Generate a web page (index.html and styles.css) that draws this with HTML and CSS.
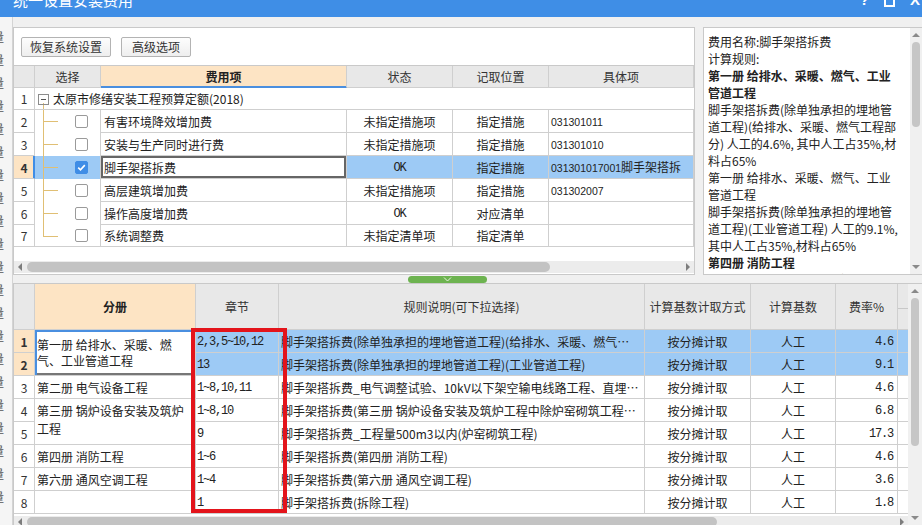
FILE: index.html
```html
<!DOCTYPE html>
<html lang="zh-CN">
<head>
<meta charset="utf-8">
<title>统一设置安装费用</title>
<link rel="stylesheet" href="styles.css">
</head>
<body>
<div class="window">
  <header class="titlebar">
    <span class="title-text">统一设置安装费用</span>
    <span class="title-btns">
      <span class="tb-help">?</span>
      <span class="tb-max"></span>
      <span class="tb-close">X</span>
    </span>
  </header>
  <div class="main">
    <div class="behind" aria-hidden="true">
      <span>量</span><span>量</span><span>量</span><span>量</span><span>量</span><span>量</span><span>量</span><span>量</span><span>量</span><span>量</span><span>量</span><span>量</span><span>量</span><span>量</span><span>量</span><span>量</span><span>量</span><span>量</span><span>量</span><span>量</span><span>量</span>
    </div>
    <div class="content">
      <div class="top">
        <section class="grid-panel">
          <div class="toolbar">
            <button class="btn btn-wide">恢复系统设置</button>
            <button class="btn btn-narrow">高级选项</button>
          </div>
          <table class="grid tgrid">
            <colgroup>
              <col class="tc-num"><col class="tc-sel"><col class="tc-fee"><col class="tc-state"><col class="tc-pos"><col>
            </colgroup>
            <thead>
              <tr><th></th><th>选择</th><th class="hl">费用项</th><th>状态</th><th>记取位置</th><th>具体项</th></tr>
            </thead>
            <tbody>
              <tr><td class="num">1</td><td colspan="5" class="root"><span class="minus"></span>太原市修缮安装工程预算定额(2018)</td></tr>
              <tr><td class="num">2</td><td class="sel"><span class="cb"></span></td><td class="name">有害环境降效增加费</td><td class="c">未指定措施项</td><td class="c">指定措施</td><td class="code"><span class="dg">031301011</span></td></tr>
              <tr><td class="num">3</td><td class="sel"><span class="cb"></span></td><td class="name">安装与生产同时进行费</td><td class="c">未指定措施项</td><td class="c">指定措施</td><td class="code"><span class="dg">031301010</span></td></tr>
              <tr class="cur"><td class="num">4</td><td class="sel"><span class="cb on"><svg viewBox="0 0 11 11" width="11" height="11"><path d="M2.2 5.6l2.3 2.3 4.3-4.8" stroke="#fff" stroke-width="1.6" fill="none"/></svg></span></td><td class="name active">脚手架搭拆费</td><td class="c"><span class="mono">OK</span></td><td class="c">指定措施</td><td class="code"><span class="dg">031301017001</span>脚手架搭拆</td></tr>
              <tr><td class="num">5</td><td class="sel"><span class="cb"></span></td><td class="name">高层建筑增加费</td><td class="c">未指定措施项</td><td class="c">指定措施</td><td class="code"><span class="dg">031302007</span></td></tr>
              <tr><td class="num">6</td><td class="sel"><span class="cb"></span></td><td class="name">操作高度增加费</td><td class="c"><span class="mono">OK</span></td><td class="c">对应清单</td><td class="code"></td></tr>
              <tr><td class="num">7</td><td class="sel last"><span class="cb"></span></td><td class="name">系统调整费</td><td class="c">未指定清单项</td><td class="c">指定清单</td><td class="code"></td></tr>
            </tbody>
          </table>
          <div class="fill"></div>
          <div class="hscroll">
            <span class="arr-left"></span>
            <span class="hthumb top-thumb"></span>
            <span class="spacer"></span>
            <span class="arr-right"></span>
          </div>
        </section>
        <aside class="info">
          <div class="info-text">
            <p>费用名称:脚手架搭拆费</p>
            <p>计算规则:</p>
            <p class="b">第一册 给排水、采暖、燃气、工业</p>
            <p class="b">管道工程</p>
            <p>脚手架搭拆费(除单独承担的埋地管</p>
            <p>道工程)(给排水、采暖、燃气工程部</p>
            <p>分) 人工的4.6%, 其中人工占35%,材</p>
            <p>料占65%</p>
            <p>第一册 给排水、采暖、燃气、工业</p>
            <p>管道工程</p>
            <p>脚手架搭拆费(除单独承担的埋地管</p>
            <p>道工程)(工业管道工程) 人工的9.1%,</p>
            <p>其中人工占35%,材料占65%</p>
            <p class="b">第四册 消防工程</p>
            <p>脚手架搭拆费(第四册 消防工程) 人</p>
          </div>
          <div class="vscroll info-scroll">
            <span class="arr-up"></span>
            <span class="vthumb info-thumb"></span>
            <span class="spacer"></span>
            <span class="arr-down"></span>
          </div>
        </aside>
      </div>
      <div class="splitter">
        <div class="handle"><svg width="9" height="5" viewBox="0 0 9 5"><path d="M1 0.5l3.5 3.5 3.5-3.5" stroke="#e9f4e2" stroke-width="1" fill="none"/></svg></div>
      </div>
      <section class="bottom">
        <div class="bottom-main">
          <table class="grid bgrid">
            <colgroup>
              <col class="bc-num"><col class="bc-vol"><col class="bc-chap"><col class="bc-rule"><col class="bc-way"><col class="bc-base"><col class="bc-rate"><col>
            </colgroup>
            <thead>
              <tr><th></th><th class="hl">分册</th><th>章节</th><th>规则说明(可下拉选择)</th><th>计算基数计取方式</th><th>计算基数</th><th>费率%</th><th class="xh"></th></tr>
            </thead>
            <tbody>
              <tr class="on">
                <td class="num">1</td>
                <td rowspan="2" class="vol two active">第一册 给排水、采暖、燃<br>气、工业管道工程</td>
                <td class="chap"><span class="mono">2,3,5~10,12</span></td>
                <td class="rule">脚手架搭拆费(除单独承担的埋地管道工程)(给排水、采暖、燃气…</td>
                <td class="c">按分摊计取</td><td class="c">人工</td><td class="rate"><span class="mono">4.6</span></td><td></td>
              </tr>
              <tr class="on">
                <td class="num">2</td>
                <td class="chap"><span class="mono">13</span></td>
                <td class="rule">脚手架搭拆费(除单独承担的埋地管道工程)(工业管道工程)</td>
                <td class="c">按分摊计取</td><td class="c">人工</td><td class="rate"><span class="mono">9.1</span></td><td></td>
              </tr>
              <tr>
                <td class="num">3</td>
                <td class="vol">第二册 电气设备工程</td>
                <td class="chap"><span class="mono">1~8,10,11</span></td>
                <td class="rule">脚手架搭拆费_电气调整试验、10kV以下架空输电线路工程、直埋…</td>
                <td class="c">按分摊计取</td><td class="c">人工</td><td class="rate"><span class="mono">4.6</span></td><td></td>
              </tr>
              <tr>
                <td class="num">4</td>
                <td rowspan="2" class="vol two low">第三册 锅炉设备安装及筑炉<br>工程</td>
                <td class="chap"><span class="mono">1~8,10</span></td>
                <td class="rule">脚手架搭拆费(第三册 锅炉设备安装及筑炉工程中除炉窑砌筑工程…</td>
                <td class="c">按分摊计取</td><td class="c">人工</td><td class="rate"><span class="mono">6.8</span></td><td></td>
              </tr>
              <tr>
                <td class="num">5</td>
                <td class="chap"><span class="mono">9</span></td>
                <td class="rule">脚手架搭拆费_工程量500m3以内(炉窑砌筑工程)</td>
                <td class="c">按分摊计取</td><td class="c">人工</td><td class="rate"><span class="mono">17.3</span></td><td></td>
              </tr>
              <tr>
                <td class="num">6</td>
                <td class="vol">第四册 消防工程</td>
                <td class="chap"><span class="mono">1~6</span></td>
                <td class="rule">脚手架搭拆费(第四册 消防工程)</td>
                <td class="c">按分摊计取</td><td class="c">人工</td><td class="rate"><span class="mono">4.6</span></td><td></td>
              </tr>
              <tr>
                <td class="num">7</td>
                <td class="vol">第六册 通风空调工程</td>
                <td class="chap"><span class="mono">1~4</span></td>
                <td class="rule">脚手架搭拆费(第六册 通风空调工程)</td>
                <td class="c">按分摊计取</td><td class="c">人工</td><td class="rate"><span class="mono">3.6</span></td><td></td>
              </tr>
              <tr>
                <td class="num">8</td>
                <td class="vol"></td>
                <td class="chap"><span class="mono">1</span></td>
                <td class="rule">脚手架搭拆费(拆除工程)</td>
                <td class="c">按分摊计取</td><td class="c">人工</td><td class="rate"><span class="mono">1.8</span></td><td></td>
              </tr>
            </tbody>
          </table>
          <div class="hscroll bottom-h">
            <span class="arr-left"></span>
            <span class="hthumb bottom-thumb"></span>
            <span class="spacer"></span>
            <span class="arr-right"></span>
          </div>
        </div>
        <div class="vscroll bottom-scroll">
          <span class="arr-up"></span>
          <span class="vthumb bottom-vthumb"></span>
          <span class="spacer"></span>
          <span class="arr-down"></span>
        </div>
        <div class="mark" aria-hidden="true"></div>
      </section>
    </div>
  </div>
</div>
</body>
</html>
```

FILE: styles.css
```css
* { box-sizing: border-box; }
html, body { margin: 0; padding: 0; }
body {
  width: 922px;
  height: 525px;
  overflow: hidden;
  background: #f0f0f0;
  font-family: "Noto Sans CJK SC", "Liberation Sans", sans-serif;
  font-size: 12px;
  color: #222;
}
p { margin: 0; }

.window { display: flex; flex-direction: column; height: 525px; }

/* title bar */
.titlebar {
  height: 17px;
  flex: none;
  background: #3f8ee6;
  color: #fff;
  display: flex;
  justify-content: space-between;
  overflow: hidden;
}
.title-text {
  font-size: 15px;
  line-height: 16px;
  margin-top: -8px;
  padding-left: 13px;
}
.title-btns {
  display: flex;
  align-items: flex-start;
  gap: 15px;
  padding-right: 2px;
  margin-top: -8px;
  font-family: "Liberation Sans", sans-serif;
  font-size: 15px;
  line-height: 16px;
  font-weight: bold;
}
.tb-max {
  width: 11px;
  height: 15px;
  border: 2px solid #fff;
}

/* main */
.main { flex: 1; display: flex; min-height: 0; }
.behind {
  width: 13px;
  flex: none;
  overflow: hidden;
  padding-top: 8px;
  background: #f5f5f5;
  border-right: 1px solid #d4d4d4;
}
.behind span {
  display: block;
  margin-left: -8px;
  line-height: 23px;
  color: #555;
}
.content {
  flex: 1;
  display: flex;
  flex-direction: column;
  padding-top: 10px;
  min-width: 0;
}

.top { display: flex; gap: 8px; height: 248px; flex: none; }

.grid-panel {
  width: 682px;
  flex: none;
  background: #fff;
  border: 1px solid #c9c9c9;
  display: flex;
  flex-direction: column;
  padding-bottom: 1px;
}
.toolbar {
  height: 38px;
  flex: none;
  border-bottom: 1px solid #c9c9c9;
  padding: 9px 0 0 7px;
  display: flex;
  align-items: flex-start;
  gap: 10px;
}
.btn {
  height: 20px;
  padding: 0;
  font-family: "Noto Sans CJK SC", sans-serif;
  font-size: 12px;
  line-height: 18px;
  color: #333;
  background: linear-gradient(#fdfdfd, #eeeeee);
  border: 1px solid #b3b3b3;
  border-radius: 2px;
}
.btn-wide { width: 90px; }
.btn-narrow { width: 70px; }

/* grids */
.grid {
  border-collapse: separate;
  border-spacing: 0;
  table-layout: fixed;
  width: 100%;
}
.grid th, .grid td {
  height: 22px;
  padding: 0;
  border-right: 1px solid #cfcfcf;
  border-bottom: 1px solid #cfcfcf;
  line-height: 20px;
  vertical-align: bottom;
  white-space: nowrap;
  overflow: hidden;
  font-weight: normal;
  color: #222;
}
.grid th { background: #e8e8e8; text-align: center; color: #333; }
.grid th.hl { background: #fde4c4; font-weight: bold; color: #222; }
.grid td.num { text-align: center; color: #333; background: #fff; }
.grid td.c { text-align: center; }

.tc-num { width: 21px; }
.tc-sel { width: 66px; }
.tc-fee { width: 246px; }
.tc-state { width: 106px; }
.tc-pos { width: 96px; }

.tgrid th.hl { border-bottom-color: #4a8fe0; box-shadow: inset 0 -1px 0 #4a8fe0; }

.tgrid td.root {
  border-right: none;
  padding-left: 3px;
  background: linear-gradient(#e0bf74, #e0bf74) no-repeat 8px 100% / 1px 6px;
}
.minus {
  display: inline-block;
  width: 11px;
  height: 11px;
  border: 1px solid #8c8c8c;
  margin-right: 4px;
  vertical-align: -1px;
  background: linear-gradient(#555, #555) no-repeat center / 5px 1px;
}
.tgrid td.sel {
  border-bottom: none;
  height: 23px;
  vertical-align: middle;
  background-image: linear-gradient(#e0bf74, #e0bf74), linear-gradient(#e0bf74, #e0bf74);
  background-size: 1px 100%, 15px 1px;
  background-position: 8px 0, 8px 11px;
  background-repeat: no-repeat;
}
.tgrid td.sel.last {
  height: 22px;
  border-bottom: 1px solid #cfcfcf;
  background-size: 1px 12px, 15px 1px;
}
.cb {
  display: block;
  width: 13px;
  height: 13px;
  margin-left: 40px;
  border: 1px solid #9a9a9a;
  border-radius: 2px;
  background: #fff;
}
.cb.on { background: #3f8de6; border-color: #3f8de6; }
.cb svg { display: block; }
.tgrid td.name { padding-left: 3px; }
.tgrid td.code { padding-left: 2px; }
.dg { font-family: "Liberation Sans", sans-serif; font-size: 10.5px; }
.mono {
  font-family: "Liberation Mono", monospace;
  font-size: 12px;
  letter-spacing: -1.2px;
}

.tgrid tr.cur td { background-color: #9dcaf5; }
.tgrid tr.cur td.num {
  background: #fde4c4;
  font-weight: bold;
  border-right-color: #3f8de6;
  box-shadow: inset -1px 0 0 #3f8de6;
}
.tgrid tr.cur td.name.active {
  background: #fff;
  box-shadow: inset 0 0 0 2px #666;
}

.fill { flex: 1; }

/* scrollbars */
.hscroll {
  height: 12px;
  flex: none;
  display: flex;
  align-items: center;
  padding: 0 4px;
  background: #ececec;
}
.spacer { flex: 1; }
.arr-left {
  width: 0; height: 0;
  border-top: 4px solid transparent;
  border-bottom: 4px solid transparent;
  border-right: 4px solid #7d7d7d;
}
.arr-right {
  width: 0; height: 0;
  border-top: 4px solid transparent;
  border-bottom: 4px solid transparent;
  border-left: 4px solid #7d7d7d;
}
.hthumb {
  height: 10px;
  margin-left: 5px;
  border-radius: 5px;
  background: #c3c3c3;
}
.top-thumb { width: 523px; }

.vscroll {
  flex: none;
  display: flex;
  flex-direction: column;
  align-items: center;
  padding: 5px 0;
  background: #f0f0f0;
}
.arr-up {
  width: 0; height: 0;
  border-left: 4px solid transparent;
  border-right: 4px solid transparent;
  border-bottom: 4px solid #8a8a8a;
}
.arr-down {
  width: 0; height: 0;
  border-left: 4px solid transparent;
  border-right: 4px solid transparent;
  border-top: 4px solid #8a8a8a;
}
.vthumb {
  width: 8px;
  margin-top: 5px;
  border-radius: 4px;
  background: #c6c6c6;
}

/* info panel */
.info {
  flex: 1;
  display: flex;
  background: #fff;
  border: 1px solid #c9c9c9;
  border-right: none;
}
.info-text {
  flex: 1;
  min-width: 0;
  padding: 5px 0 0 4px;
  line-height: 17px;
  overflow: hidden;
  white-space: nowrap;
  color: #222;
}
.info-text .b { font-weight: bold; }
.info-scroll { width: 12px; }
.info-thumb { height: 85px; }

/* splitter */
.splitter {
  height: 8px;
  flex: none;
  padding: 1px 0 0 395px;
}
.handle {
  width: 79px;
  height: 7px;
  border-radius: 4px;
  background: #6db350;
  display: flex;
  justify-content: center;
  align-items: center;
}
.handle svg { display: block; }

/* bottom grid */
.bottom {
  flex: 1;
  position: relative;
  display: flex;
  min-height: 0;
  overflow: hidden;
  background: #fff;
  border: 1px solid #c9c9c9;
  border-bottom: none;
  border-right: none;
}
.bottom-main { flex: 1; min-width: 0; display: flex; flex-direction: column; }
.bgrid thead th { height: 46px; vertical-align: middle; }
.bc-num { width: 21px; }
.bc-vol { width: 161px; }
.bc-chap { width: 83px; }
.bc-rule { width: 366px; }
.bc-way { width: 106px; }
.bc-base { width: 85px; }
.bc-rate { width: 62px; }
.bgrid th.xh {
  border-right: none;
  background: #e8e8e8 linear-gradient(#c8c8c8, #c8c8c8) no-repeat 0 24px / 100% 1px;
}
.bgrid td:last-child { border-right: none; }
.bgrid td.vol { padding-left: 2px; }
.bgrid td.vol.two { line-height: 16px; vertical-align: middle; }
.bgrid td.vol.low { line-height: 18px; padding-bottom: 4px; }
.bgrid td.vol.active {
  box-shadow: inset 2px 2px 0 #4a8fe0, inset -2px -2px 0 #777;
}
.bgrid td.chap { padding-left: 1px; }
.bgrid td.rule { padding-left: 2px; }
.bgrid td.rate { text-align: right; padding-right: 4px; }
.bgrid tr.on td { background: #9dcaf5; }
.bgrid tr.on td.num { background: #fde4c4; font-weight: bold; }
.bgrid tr.on td.vol { background: #fff; }
.bottom-h { margin-top: 2px; }
.bottom-thumb { width: 690px; }
.bottom-scroll { width: 14px; }
.bottom-vthumb { height: 148px; }

/* red annotation box drawn over the 章节 column */
.mark {
  position: absolute;
  left: 177px;
  top: 44px;
  width: 96px;
  height: 185px;
  border: 4px solid #e3141b;
  pointer-events: none;
}
```
